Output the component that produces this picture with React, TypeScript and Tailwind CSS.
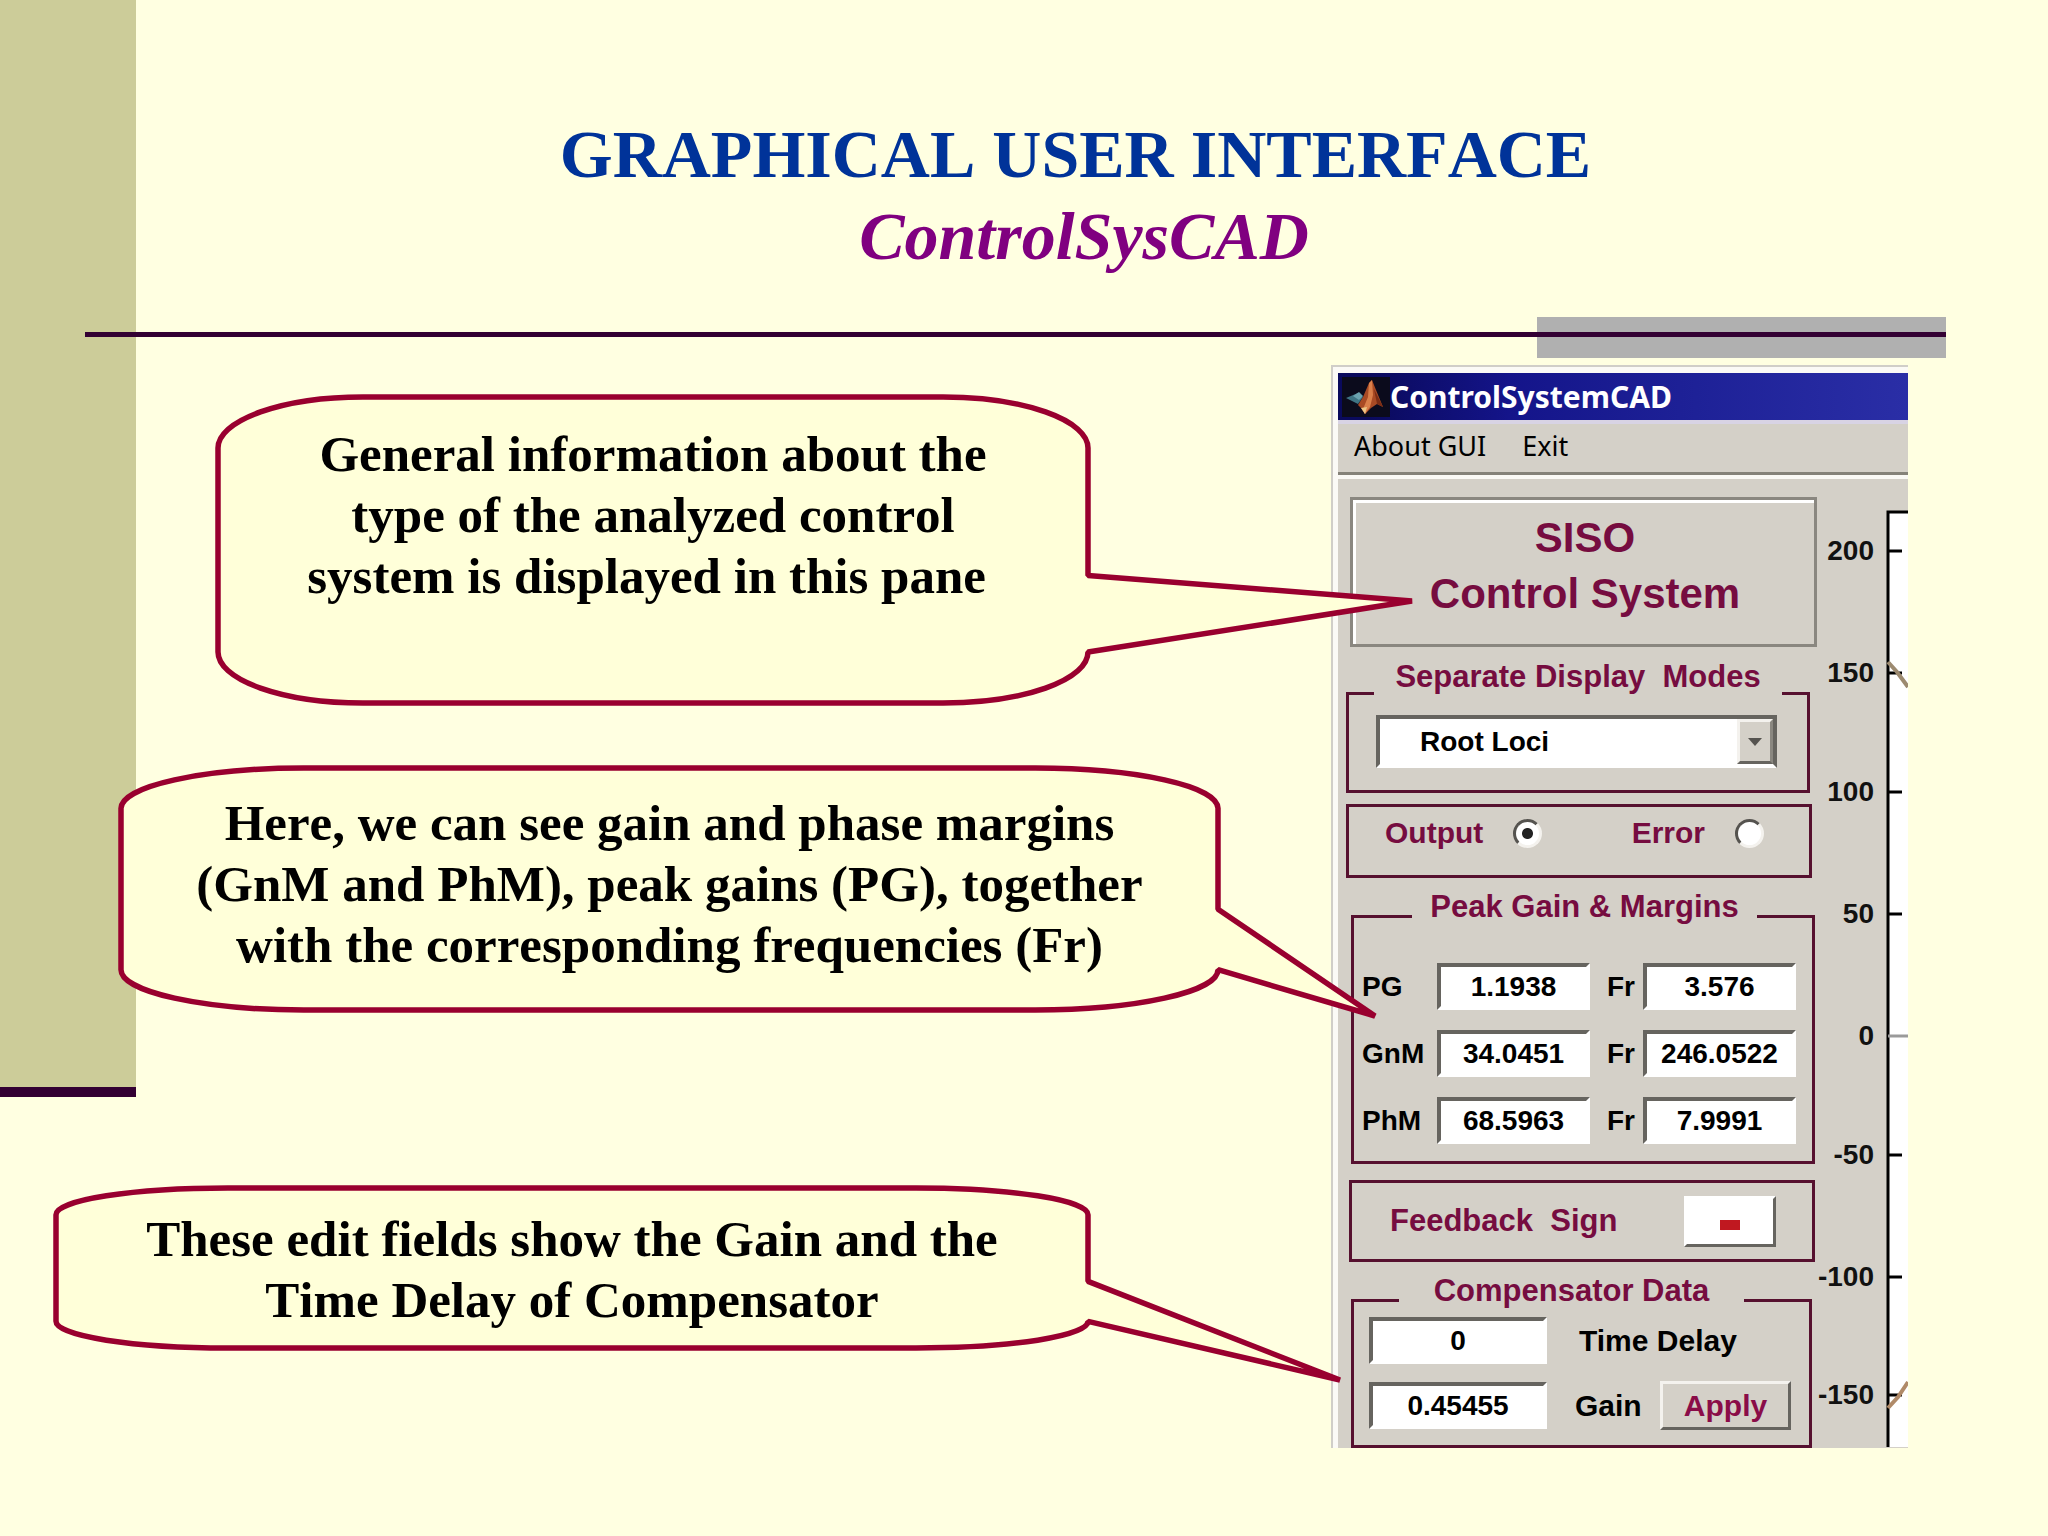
import { useState } from 'react'
import type { ReactNode } from 'react'

interface CalloutProps {
  className: string
  width: number
  height: number
  // tip of the tail, measured from the top left corner of the box
  tipX: number
  tipY: number
  children: ReactNode
}

// Rounded speech box, the corner radii are a sixth of each side
function Callout({ className, width, height, tipX, tipY, children }: CalloutProps) {
  const rx = width / 6
  const ry = height / 6
  const path = [
    `M ${rx} 0 H ${width - rx}`,
    `A ${rx} ${ry} 0 0 1 ${width} ${ry}`,
    `V ${(height * 7) / 12} L ${tipX} ${tipY} L ${width} ${(height * 5) / 6}`,
    `A ${rx} ${ry} 0 0 1 ${width - rx} ${height}`,
    `H ${rx} A ${rx} ${ry} 0 0 1 0 ${height - ry}`,
    `V ${ry} A ${rx} ${ry} 0 0 1 ${rx} 0 Z`,
  ].join(' ')

  return (
    <div className={`relative ${className}`}>
      <svg
        className="absolute inset-0 overflow-visible"
        width={width}
        height={height}
        aria-hidden="true"
      >
        <path d={path} fill="#ffffd9" stroke="#99002f" strokeWidth="5.5" strokeLinejoin="bevel" />
      </svg>
      <p className="relative whitespace-nowrap text-center text-[51px] font-bold leading-[61px] text-black [font-kerning:none]">
        {children}
      </p>
    </div>
  )
}

function MatlabLogo() {
  return (
    <svg className="h-10 w-12 shrink-0" viewBox="0 0 48 40" aria-hidden="true">
      <rect width="48" height="40" fill="#0b0b1c" />
      <path d="M4 21 L16 16 L21 20 L16 27 Z" fill="#3f7484" />
      <path d="M11 19 L17 15 L21 19 L17 23 Z" fill="#6ba3b0" />
      <path d="M16 28 L21 20 L27 6 L30 3 L34 13 L41 30 L35 27 L29 31 L23 37 L19 31 Z" fill="#a84a24" />
      <path d="M27 6 L30 3 L31 18 L28 30 L23 37 L21 32 L26 20 Z" fill="#d97f4a" />
      <path d="M19 31 L25 30 L23 37 Z" fill="#ecc585" />
      <path d="M32 12 L41 30 L35 27 Z" fill="#7a2c14" />
    </svg>
  )
}

interface GroupProps {
  title: string
  className: string
  bodyClass: string
  stemClass: string
  leftClass: string
  rightClass: string
  children: ReactNode
}

function Group({ title, className, bodyClass, stemClass, leftClass, rightClass, children }: GroupProps) {
  return (
    <section className={className}>
      <div className="flex items-end justify-between">
        <span className={`border-l-[3px] border-t-[3px] border-[#56102f] ${stemClass} ${leftClass}`} />
        <h3 className="whitespace-pre text-[31px] font-bold leading-9 text-[#760c40]">{title}</h3>
        <span className={`border-r-[3px] border-t-[3px] border-[#56102f] ${stemClass} ${rightClass}`} />
      </div>
      <div className={`border-x-[3px] border-b-[3px] border-[#56102f] ${bodyClass}`}>{children}</div>
    </section>
  )
}

interface FieldProps {
  id: string
  label?: string
  value: string
  className: string
}

function Field({ id, label, value, className }: FieldProps) {
  return (
    <input
      id={id}
      aria-label={label}
      defaultValue={value}
      className={`h-[47px] border-4 border-b-white border-l-[#66645f] border-r-white border-t-[#66645f] bg-white text-center text-[28px] font-bold text-black outline-none ${className}`}
    />
  )
}

const margins = [
  { name: 'PG', value: '1.1938', freq: '3.576' },
  { name: 'GnM', value: '34.0451', freq: '246.0522' },
  { name: 'PhM', value: '68.5963', freq: '7.9991' },
]

const ticks = [
  { label: '200', y: 72 },
  { label: '150', y: 194 },
  { label: '100', y: 313 },
  { label: '50', y: 435 },
  { label: '0', y: 557 },
  { label: '-50', y: 676 },
  { label: '-100', y: 798 },
  { label: '-150', y: 916 },
]

function Axis() {
  return (
    <svg className="h-[968px] w-[91px] shrink-0" viewBox="0 0 91 968">
      <rect x="71" y="33" width="20" height="935" fill="#ffffff" />
      <path d="M91 33 H71 V968" fill="none" stroke="#000000" strokeWidth="3" />
      {ticks.map((tick) => (
        <g key={tick.label}>
          <path
            d={`M71 ${tick.y} H${tick.label === '0' ? 91 : 85}`}
            stroke={tick.label === '0' ? '#9a9a9a' : '#000000'}
            strokeWidth="3"
          />
          <text x="57" y={tick.y + 9} textAnchor="end" fontSize="28" fontWeight="bold" fill="#111111">
            {tick.label}
          </text>
        </g>
      ))}
      {/* visible ends of the loci */}
      <path d="M71 183 L80 193 L91 208" fill="none" stroke="#9c8a70" strokeWidth="4" />
      <path d="M71 929 L81 918 L91 903" fill="none" stroke="#b08a68" strokeWidth="4" />
    </svg>
  )
}

function ControlWindow() {
  const [signal, setSignal] = useState('output')
  const radio =
    'size-[29px] appearance-none rounded-full border-[3px] border-b-[#f4f2ee] border-l-[#55534f] border-r-[#f4f2ee] border-t-[#55534f] bg-white checked:bg-[radial-gradient(circle,#222222_5px,#ffffff_6px)]'

  return (
    <div className="w-[577px] shrink-0 overflow-hidden border-l-2 border-t-2 border-[#d0cec8] bg-[#d4d0c8] font-['Liberation_Sans',sans-serif]">
      <div className="border-l-[5px] border-t-[6px] border-[#fbfaf6]">
        <div className="flex h-[47px] items-center bg-linear-to-r from-[#0a0a5c] from-5% via-[#14148a] via-30% to-[#2a2ea6] pl-1">
          <MatlabLogo />
          <h2 className="font-['Noto_Sans',sans-serif] text-[30px] font-bold leading-10 text-white">
            ControlSystemCAD
          </h2>
        </div>
        <nav className="flex h-[59px] items-center gap-9 border-b-4 border-t-4 border-b-[#faf9f5] border-t-[#d8d3e4] pb-2 pl-4 font-['Noto_Sans',sans-serif] text-[27px] leading-9 text-black shadow-[inset_0_-3px_0_#858279]">
          <button type="button">About GUI</button>
          <button type="button">Exit</button>
        </nav>

        <div className="flex">
          <div className="w-[479px] shrink-0 pt-[18px]">
            <div className="ml-3 h-[150px] border-[3px] border-[#8a8780] text-center text-[42px] font-bold leading-[56px] text-[#760c40]">
              <p className="h-full border-l-[3px] border-t-[3px] border-white pt-[7px]">
                SISO
                <br />
                Control System
              </p>
            </div>

            <Group
              title="Separate Display  Modes"
              className="ml-2 mr-[7px] mt-3"
              bodyClass="pb-[22px] pl-[27px] pr-[30px] pt-5"
              stemClass="h-[3px]"
              leftClass="w-7"
              rightClass="w-7"
            >
              <div className="relative">
                <select
                  aria-label="Display mode"
                  defaultValue="Root Loci"
                  className="block h-[53px] w-full appearance-none border-4 border-b-white border-l-[#66645f] border-r-[#66645f] border-t-[#66645f] bg-white pl-10 text-[28px] font-bold text-black outline-none"
                >
                  <option>Root Loci</option>
                </select>
                <span className="pointer-events-none absolute bottom-1 right-1 top-1 flex w-9 items-center justify-center border-[3px] border-b-[#66645f] border-l-[#f4f2ee] border-r-[#8a8780] border-t-[#f4f2ee] bg-[#d4d0c8]">
                  <svg width="14" height="8" viewBox="0 0 14 8" aria-hidden="true">
                    <path d="M0 0 H14 L7 8 Z" fill="#55534f" />
                  </svg>
                </span>
              </div>
            </Group>

            <div className="ml-2 mr-[5px] mt-[11px] flex h-[74px] items-start border-[3px] border-[#56102f] pl-9 pr-[45px] pt-2 text-[30px] font-bold leading-9 text-[#760c40]">
              <label className="flex items-center gap-[30px]">
                Output
                <input
                  type="radio"
                  name="signal"
                  className={radio}
                  checked={signal === 'output'}
                  onChange={() => setSignal('output')}
                />
              </label>
              <label className="ml-auto flex items-center gap-[30px]">
                Error
                <input
                  type="radio"
                  name="signal"
                  className={radio}
                  checked={signal === 'error'}
                  onChange={() => setSignal('error')}
                />
              </label>
            </div>

            <Group
              title="Peak Gain & Margins"
              className="ml-[13px] mr-0.5 mt-[11px]"
              bodyClass="space-y-5 pb-[17px] pl-2 pr-4 pt-[38px]"
              stemClass="h-2.5"
              leftClass="w-[61px]"
              rightClass="w-[58px]"
            >
              {margins.map((row) => (
                <div key={row.name} className="flex items-center text-[28px] font-bold leading-8 text-black">
                  <label htmlFor={row.name} className="w-[75px]">
                    {row.name}
                  </label>
                  <Field id={row.name} value={row.value} className="w-[153px]" />
                  <label htmlFor={`${row.name}-fr`} className="ml-auto mr-2">
                    Fr
                  </label>
                  <Field id={`${row.name}-fr`} value={row.freq} className="w-[153px]" />
                </div>
              ))}
            </Group>

            <div className="ml-[11px] mr-0.5 mt-4 flex h-[82px] items-center justify-between border-[3px] border-[#56102f] pl-[38px] pr-9">
              <h3 className="whitespace-pre text-[31px] font-bold leading-9 text-[#760c40]">Feedback  Sign</h3>
              <button
                type="button"
                aria-label="Negative feedback"
                className="flex h-[51px] w-[92px] items-center justify-center border-[3px] border-b-[#66645f] border-l-white border-r-[#66645f] border-t-white bg-white pt-2"
              >
                <span className="h-2.5 w-5 bg-[#c01820]" />
              </button>
            </div>

            <Group
              title="Compensator Data"
              className="ml-[13px] mr-[5px] mt-[11px]"
              bodyClass="space-y-[17px] pb-[15px] pl-[15px] pr-[18px] pt-2"
              stemClass="h-2.5"
              leftClass="w-12"
              rightClass="w-[68px]"
            >
              <div className="flex items-center text-[30px] font-bold leading-9 text-black">
                <Field id="delay" value="0" className="w-[178px]" />
                <label htmlFor="delay" className="ml-8">
                  Time Delay
                </label>
              </div>
              <div className="flex items-center text-[30px] font-bold leading-9 text-black">
                <Field id="gain" value="0.45455" className="w-[178px]" />
                <label htmlFor="gain" className="ml-7">
                  Gain
                </label>
                <button
                  type="button"
                  className="ml-auto h-[49px] w-[131px] border-[3px] border-b-[#66645f] border-l-[#f4f2ee] border-r-[#66645f] border-t-[#f4f2ee] text-[#8a0c48]"
                >
                  Apply
                </button>
              </div>
            </Group>
          </div>
          <Axis />
        </div>
      </div>
    </div>
  )
}

export default function App() {
  return (
    <div className="relative min-h-screen overflow-hidden bg-[#ffffe1] pb-[89px] font-['Liberation_Serif',serif]">
      {/* Side band behind the slide content */}
      <div className="absolute left-0 top-0 h-[1097px] w-[136px] border-b-[10px] border-[#330033] bg-[#cccc99]" />

      <header className="relative pt-[113px]">
        <h1 className="pl-[136px] pr-4 text-center text-[68px] font-bold leading-[82px] text-[#003399] [font-kerning:none]">
          GRAPHICAL USER INTERFACE&nbsp;
          <br />
          <em className="text-[#800080]">ControlSysCAD</em>
        </h1>
        <div className="ml-[85px] mr-[102px] mt-10 grid">
          <div className="col-start-1 row-start-1 h-[41px] w-[22%] justify-self-end bg-[#b0b0b0]" />
          <div className="col-start-1 row-start-1 mt-[15px] h-[5px] bg-[#330033]" />
        </div>
      </header>

      <main className="relative mt-[7px] flex items-start justify-between pr-[140px]">
        <div className="relative z-10 pt-8">
          <Callout className="ml-[218px] w-[870px] pb-24 pt-[27px]" width={870} height={306} tipX={1194} tipY={204}>
            General information about the
            <br />
            type of the analyzed control
            <br />
            system is displayed in this pane&nbsp;
          </Callout>
          <Callout className="ml-[121px] mt-[65px] w-[1097px] pb-[34px] pt-[25px]" width={1097} height={242} tipX={1254} tipY={248}>
            Here, we can see gain and phase margins
            <br />
            (GnM and PhM), peak gains (PG), together
            <br />
            with the corresponding frequencies (Fr)
          </Callout>
          <Callout className="ml-[56px] mt-[178px] w-[1032px] pb-[17px] pt-[21px]" width={1032} height={160} tipX={1284} tipY={192}>
            These edit fields show the Gain and the
            <br />
            Time Delay of Compensator
          </Callout>
        </div>
        <ControlWindow />
      </main>
    </div>
  )
}
